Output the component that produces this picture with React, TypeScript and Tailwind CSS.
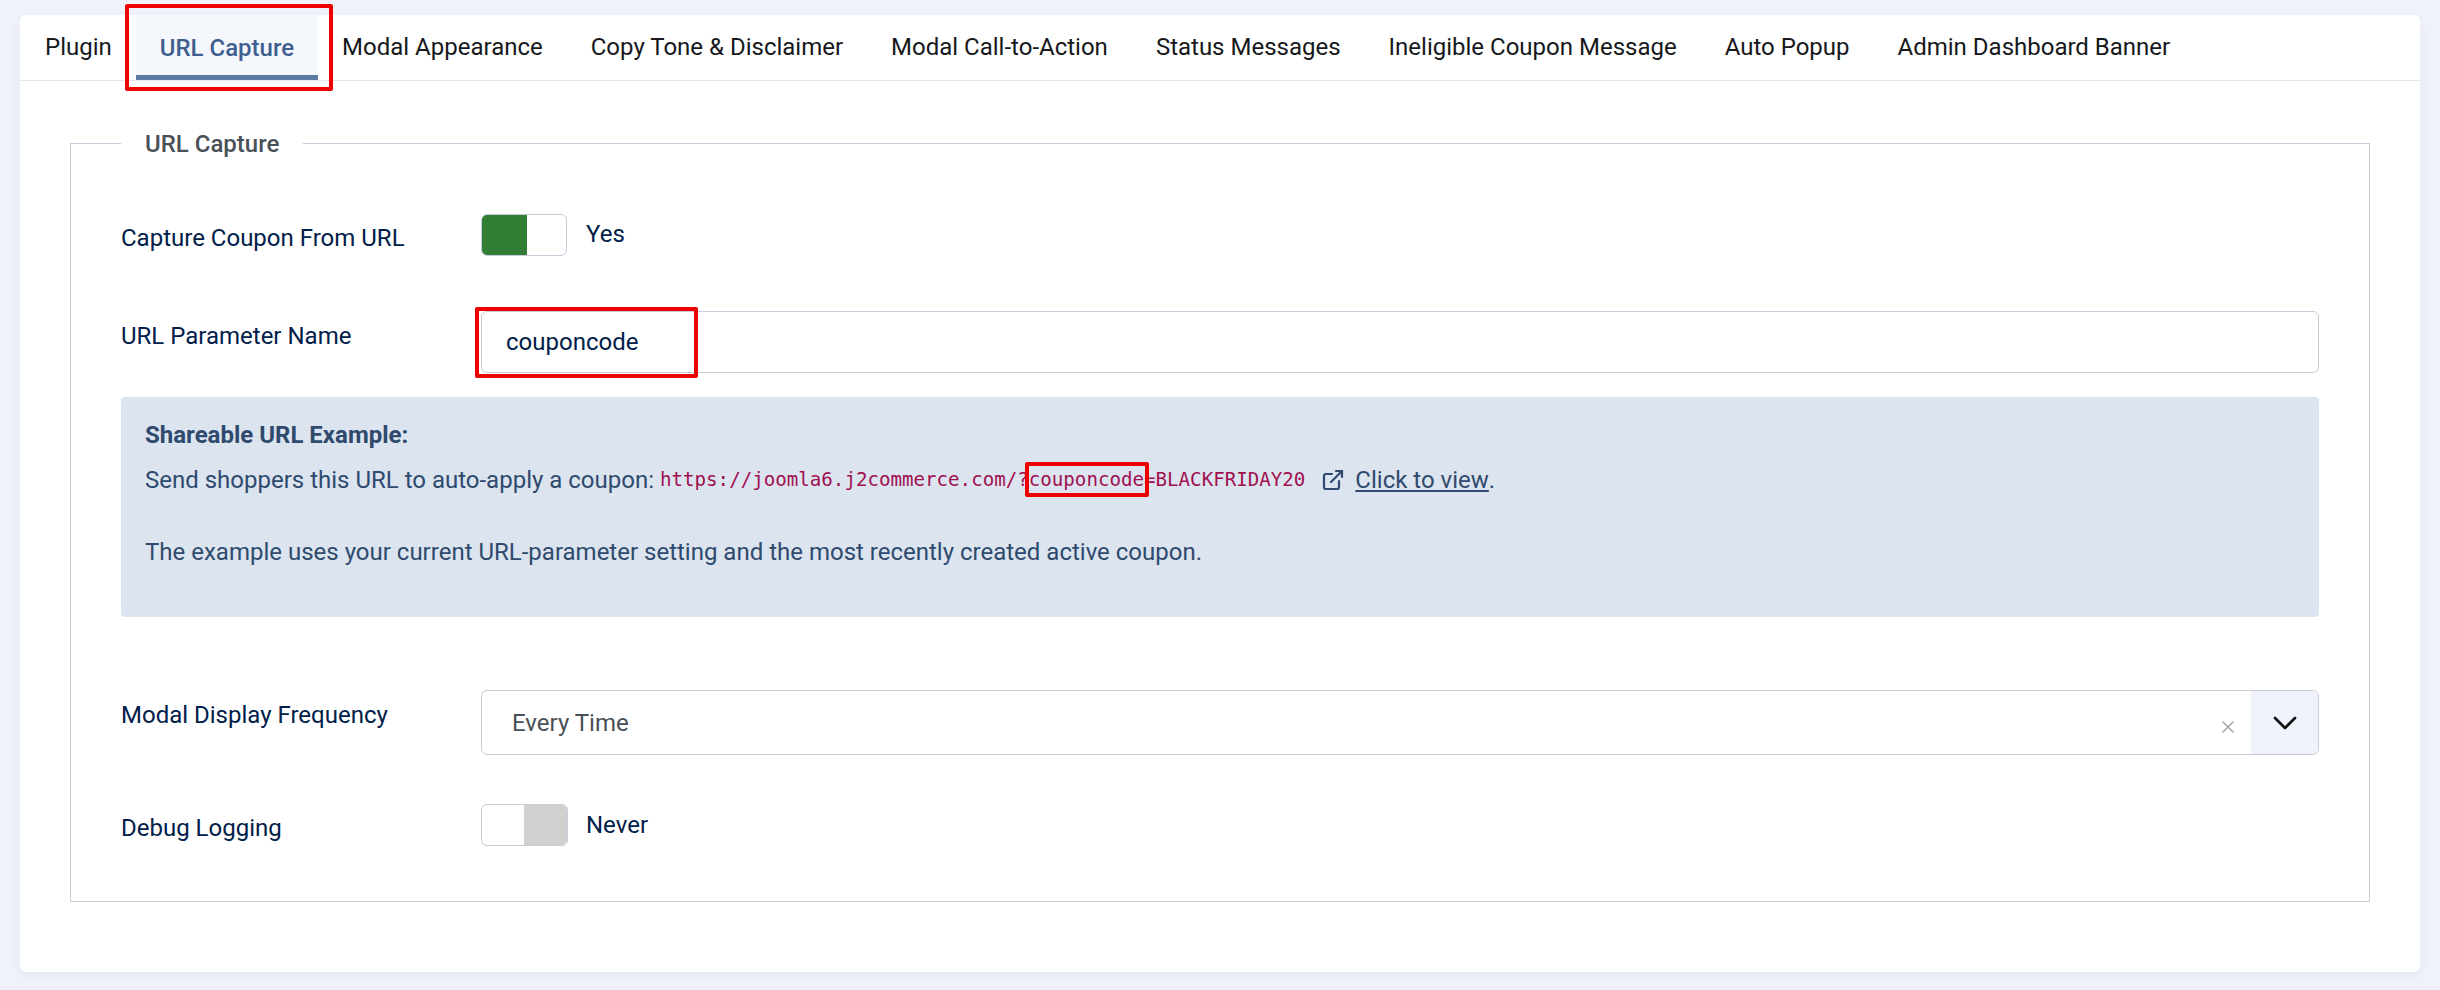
import React from 'react';
import { ChevronDown, ExternalLink, X } from 'lucide-react';

const tabs = [
  'Plugin',
  'URL Capture',
  'Modal Appearance',
  'Copy Tone & Disclaimer',
  'Modal Call-to-Action',
  'Status Messages',
  'Ineligible Coupon Message',
  'Auto Popup',
  'Admin Dashboard Banner',
];

const App = () => {
  return (
    <div className="h-[990px] overflow-hidden bg-[#eff2fa] pt-[15px] px-[20px] font-['Roboto',sans-serif] text-[24px] text-[#00204a]">
      <div className="h-[957px] rounded-[6px] bg-white shadow-[0_4px_12px_rgba(60,80,140,0.06)]">
        {/* tabs */}
        <div className="flex h-[66px] border-b border-[#e4e6eb] pl-[1px]">
          {tabs.map((tab) =>
            tab === 'URL Capture' ? (
              <div key={tab} className="relative flex h-[65px] items-center border-b-[5px] border-[#5d7aa5] bg-[#f4f7fb] px-[24px] pt-[5px] font-medium text-[#3f5f8f]">
                {tab}
                <div className="absolute -left-[11px] -right-[15px] -top-[11px] -bottom-[16px] rounded-[2px] border-[4px] border-[#ee0000]" />
              </div>
            ) : (
              <div key={tab} className="flex h-[65px] items-center px-[24px] pb-[1px] text-[#16181b]">
                {tab}
              </div>
            )
          )}
        </div>

        {/* settings group */}
        <fieldset className="mx-[50px] mt-[44px] h-[777px] border border-[#c8cbd9] px-[50px]">
          <legend className="translate-y-[1px] px-[24px] font-medium text-[#495057]">URL Capture</legend>

          <div className="mt-[52px] flex items-center">
            <div className="w-[360px] pt-[7px]">Capture Coupon From URL</div>
            <div className="flex h-[42px] w-[86px] overflow-hidden rounded-[6px] border border-[#c8cbd9]">
              <div className="w-[45px] bg-[#327e35]" />
            </div>
            <span className="ml-[19px] -mt-[2px]">Yes</span>
          </div>

          <div className="mt-[55px] flex">
            <div className="w-[360px] pt-[7px]">URL Parameter Name</div>
            <div className="relative flex h-[62px] flex-1 items-center rounded-[6px] border border-[#c8cbd9] pl-[24px]">
              couponcode
              <div className="absolute -left-[7px] -top-[5px] h-[71px] w-[223px] rounded-[2px] border-[4px] border-[#ee0000]" />
            </div>
          </div>

          <div className="mt-[24px] h-[220px] rounded-[4px] bg-[#dbe4ef] px-[24px] pt-[20px] leading-[36px] text-[#2f4a6d]">
            <div className="font-bold">Shareable URL Example:</div>
            <div className="mt-[9px] flex items-center">
              Send shoppers this URL to auto-apply a coupon:
              <code className="ml-[6px] font-['DejaVu_Sans_Mono',monospace] text-[19.15px] text-[#a0104f]">
                https://joomla6.j2commerce.com/?
                <span className="relative">
                  couponcode
                  <span className="absolute -left-[4px] -right-[5px] -top-[6px] -bottom-[6px] rounded-[2px] border-[4px] border-[#ee0000]" />
                </span>
                =BLACKFRIDAY20
              </code>
              <ExternalLink className="ml-[16px] mr-[10px] h-[24px] w-[24px]" strokeWidth={2.2} />
              <span className="underline">Click to view</span>.
            </div>
            <div className="mt-[36px]">The example uses your current URL-parameter setting and the most recently created active coupon.</div>
          </div>

          <div className="mt-[73px] flex">
            <div className="w-[360px] pt-[7px]">Modal Display Frequency</div>
            <div className="flex h-[65px] flex-1 items-center rounded-[6px] border border-[#c8cbd9]">
              <span className="flex-1 pl-[30px] text-[#495057]">Every Time</span>
              <X className="mr-[13px] mt-[9px] h-[20px] w-[20px] text-[#a8a8a8]" strokeWidth={2} />
              <div className="flex h-full w-[67px] items-center justify-center rounded-r-[6px] bg-[#eff2fa]">
                <ChevronDown className="h-[40px] w-[40px] text-[#111]" strokeWidth={1.6} />
              </div>
            </div>
          </div>

          <div className="mt-[48px] flex items-center">
            <div className="w-[360px] pt-[7px]">Debug Logging</div>
            <div className="flex h-[42px] w-[87px] justify-end overflow-hidden rounded-[6px] border border-[#c8cbd9]">
              <div className="w-[43px] bg-[#d0d0d0]" />
            </div>
            <span className="ml-[18px]">Never</span>
          </div>
        </fieldset>
      </div>
    </div>
  );
};

export default App;
